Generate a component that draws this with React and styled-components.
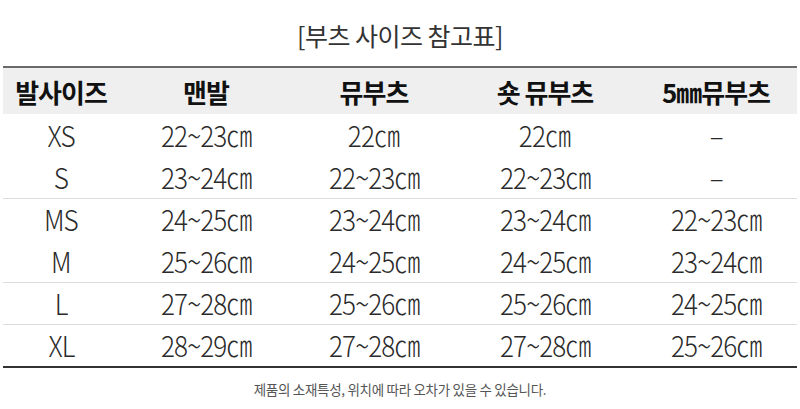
import React from 'react';
import styled, { createGlobalStyle } from 'styled-components';

const GlobalStyle = createGlobalStyle`
  body {
    margin: 0;
    background: #fff;
    font-family: "Noto Sans CJK KR", "Noto Sans", sans-serif;
  }
`;

const Page = styled.div`
  width: 800px;
  height: 409px;
  display: flex;
  flex-direction: column;
  align-items: center;
  overflow: hidden;
`;

const Title = styled.h1`
  margin: 0;
  height: 66px;
  display: flex;
  align-items: center;
  padding-top: 4px;
  box-sizing: border-box;
  font-size: 25px;
  font-weight: 400;
  color: #333;
  letter-spacing: -0.5px;
`;

const Table = styled.div`
  width: 794px;
  display: grid;
  grid-template-columns: 116px 174px 162px 180px 162px;
  border-top: 2px solid #6a6a6a;
  border-bottom: 2px solid #333;
`;

const HeadCell = styled.div`
  height: 46px;
  background: #efefef;
  display: flex;
  align-items: center;
  justify-content: center;
  font-size: 26px;
  font-weight: 700;
  color: #111;
  letter-spacing: -1px;
`;

const Cell = styled.div`
  height: 42px;
  box-sizing: border-box;
  padding-bottom: 3px;
  display: flex;
  align-items: center;
  justify-content: center;
  font-size: 29px;
  font-weight: 300;
  color: #2a2a2a;
  letter-spacing: -1px;
  border-top: ${(p) => (p.$divided ? '1px solid #dcdcdc' : 'none')};
`;

const Narrow = styled.span`
  display: inline-block;
  transform: scaleX(0.9);
`;

const Note = styled.p`
  margin: 0;
  flex: 1;
  display: flex;
  align-items: center;
  font-size: 13.5px;
  color: #555;
  letter-spacing: -0.3px;
`;

const headers = ['발사이즈', '맨발', '뮤부츠', '숏 뮤부츠', '5㎜뮤부츠'];

const rows = [
  { size: 'XS', values: ['22~23㎝', '22㎝', '22㎝', '–'] },
  { size: 'S', values: ['23~24㎝', '22~23㎝', '22~23㎝', '–'] },
  { size: 'MS', values: ['24~25㎝', '23~24㎝', '23~24㎝', '22~23㎝'], divided: true },
  { size: 'M', values: ['25~26㎝', '24~25㎝', '24~25㎝', '23~24㎝'] },
  { size: 'L', values: ['27~28㎝', '25~26㎝', '25~26㎝', '24~25㎝'], divided: true },
  { size: 'XL', values: ['28~29㎝', '27~28㎝', '27~28㎝', '25~26㎝'], divided: true },
];

export default function App() {
  return (
    <>
      <GlobalStyle />
      <Page>
        <Title>[부츠 사이즈 참고표]</Title>
        <Table>
          {headers.map((h) => (
            <HeadCell key={h}>{h}</HeadCell>
          ))}
          {rows.map((row) => (
            <React.Fragment key={row.size}>
              <Cell $divided={row.divided}><Narrow>{row.size}</Narrow></Cell>
              {row.values.map((v, i) => (
                <Cell key={i} $divided={row.divided}><Narrow>{v}</Narrow></Cell>
              ))}
            </React.Fragment>
          ))}
        </Table>
        <Note>제품의 소재특성, 위치에 따라 오차가 있을 수 있습니다.</Note>
      </Page>
    </>
  );
}
